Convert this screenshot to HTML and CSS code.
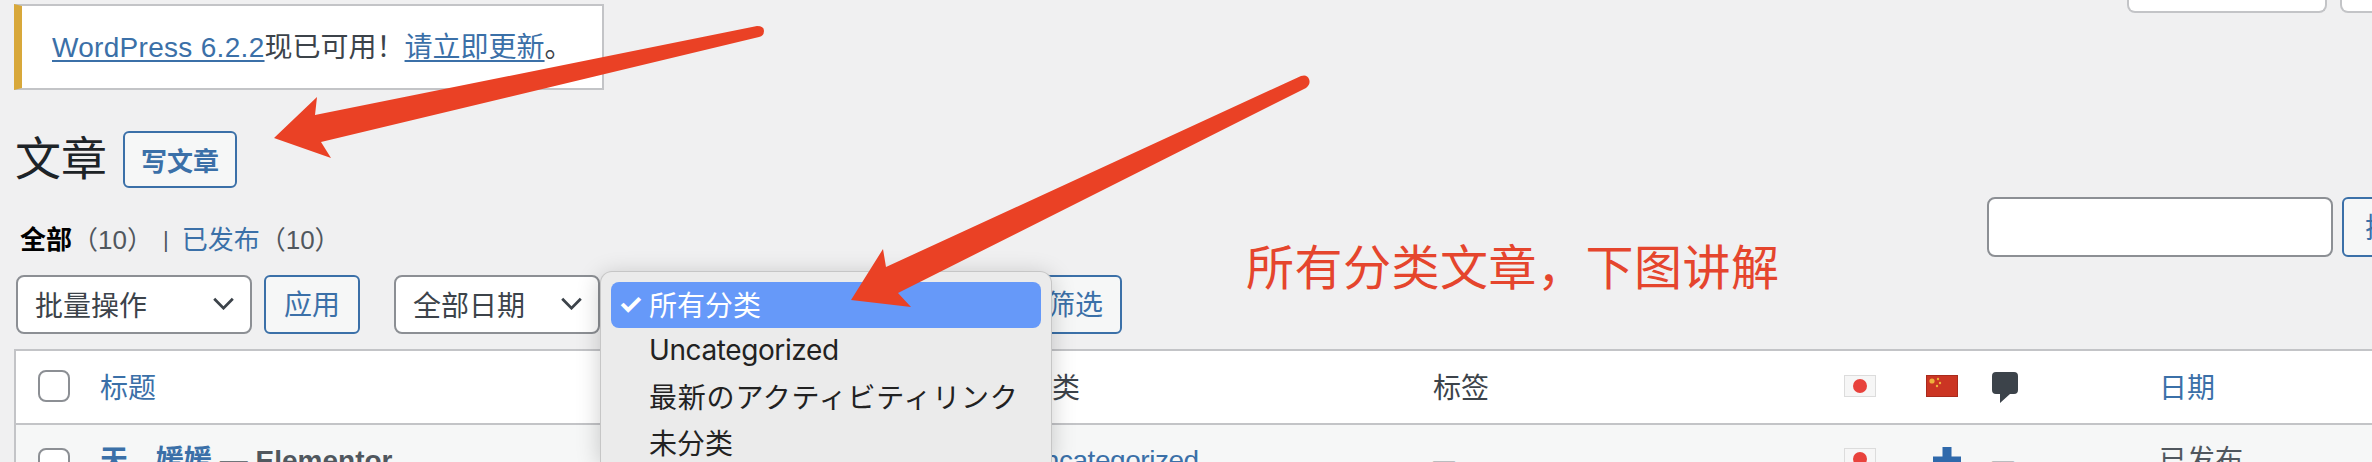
FILE: index.html
```html
<!DOCTYPE html>
<html lang="zh-CN">
<head>
    <meta charset="UTF-8">
    <meta name="viewport" content="width=device-width, initial-scale=1.0">
    <title>文章</title>
    <link rel="stylesheet" href="styles.css">
</head>
<body>
    <div class="top">
        <div class="notice"><a href="#">WordPress 6.2.2</a>现已可用！<a href="#">请立即更新</a>。</div>
        <div class="screen-tab"></div>
        <div class="screen-tab"></div>
    </div>

    <div class="heading">
        <h1>文章</h1>
        <a class="btn btn-new" href="#">写文章</a>
    </div>

    <div class="filters">
        <ul class="subsub">
            <li class="current">全部<span class="count">（10）</span></li>
            <li class="sep">|</li>
            <li><a href="#">已发布</a><span class="count">（10）</span></li>
        </ul>
        <div class="search-box">
            <div class="search-input"></div>
            <a class="btn btn-search" href="#">搜索文章</a>
        </div>
    </div>

    <div class="tablenav">
        <div class="select select-bulk">批量操作
            <svg class="chevron" viewBox="0 0 24 14"><path d="M2 2l10 10L22 2"/></svg>
        </div>
        <a class="btn btn-apply" href="#">应用</a>
        <div class="select select-date">全部日期
            <svg class="chevron" viewBox="0 0 24 14"><path d="M2 2l10 10L22 2"/></svg>
        </div>
        <div class="select select-cat"></div>
        <a class="btn btn-filter" href="#">筛选</a>
    </div>

    <div class="posts">
        <div class="row row-head">
            <span class="checkbox"></span>
            <a href="#">标题</a>
            <a class="plain" href="#">分类</a>
            <span>标签</span>
            <svg class="flag" viewBox="0 0 32 22"><rect width="32" height="22" fill="#dcdcdc"/><rect x="1" y="1" width="30" height="20" fill="#f6f6f6"/><circle cx="16" cy="11" r="7" fill="#e8423c"/></svg>
            <svg class="flag" viewBox="0 0 32 22"><rect width="32" height="22" fill="#a92a1c"/><rect x="1" y="1" width="30" height="20" fill="#cb3523"/><circle cx="6" cy="6" r="2.600" fill="#eeb13c"/><circle cx="12" cy="4" r="1.200" fill="#eeb13c"/><circle cx="14" cy="8" r="1.200" fill="#eeb13c"/><circle cx="11" cy="11" r="1.200" fill="#eeb13c"/></svg>
            <svg class="comment" viewBox="0 0 26 32"><path d="M4 0h18a4 4 0 0 1 4 4v14a4 4 0 0 1-4 4H18L8 31v-9H4a4 4 0 0 1-4-4V4a4 4 0 0 1 4-4z"/></svg>
            <a href="#">日期</a>
        </div>
        <div class="row row-post">
            <span class="checkbox"></span>
            <div class="post-title"><a href="#">天，媛媛</a> — Elementor</div>
            <a class="cat-link" href="#">Uncategorized</a>
            <span class="none">—</span>
            <svg class="flag" viewBox="0 0 32 22"><rect width="32" height="22" fill="#dcdcdc"/><rect x="1" y="1" width="30" height="20" fill="#f6f6f6"/><circle cx="16" cy="11" r="7" fill="#e8423c"/></svg>
            <svg class="plus" viewBox="0 0 28 28"><path d="M9.500 0h9v9.500H28v9h-9.500V28h-9v-9.500H0v-9h9.500z"/></svg>
            <span class="none">—</span>
            <span class="status">已发布</span>
        </div>
    </div>

    <ul class="menu">
        <li class="selected"><span class="check">✓</span>所有分类</li>
        <li class="latin">Uncategorized</li>
        <li class="kana" lang="ja">最新のアクティビティリンク</li>
        <li>未分类</li>
    </ul>

    <p class="note">所有分类文章，下图讲解</p>

    <svg class="arrows" viewBox="0 0 2372 462">
        <path d="M274 138L317 97L315 115L757 26Q764 26 764 31Q764 36 759 37L321 142L331 158Z"/>
        <path d="M851 300L883 249L886 267L1301 76Q1307 74 1309 79Q1311 84 1306 88L898 293L911 307Z"/>
    </svg>
</body>
</html>
```

FILE: styles.css
```css
* {
    box-sizing: border-box;
}

html, body {
    height: 462px;
    overflow: hidden;
}

body {
    position: relative;
    margin: 0;
    padding-left: 14px;
    background-color: #f0f0f1;
    color: #3c434a;
    font-family: "Liberation Sans", "Noto Sans CJK SC", sans-serif;
    font-size: 28px;
}

a {
    color: #3b70a8;
    text-decoration: none;
}

/* top row */
.top {
    display: flex;
    align-items: flex-start;
}

.notice {
    flex: none;
    width: 590px;
    height: 86px;
    margin-top: 4px;
    padding-left: 30px;
    border: 2px solid #c3c4c7;
    border-left: 8px solid #d8a83a;
    background-color: #fff;
    line-height: 83px;
}

.notice a {
    text-decoration: underline;
    text-underline-offset: 3px;
}

.notice a:first-child {
    letter-spacing: .3px;
}

.screen-tab {
    flex: none;
    width: 200px;
    height: 13px;
    margin-right: 13px;
    border: 2px solid #c3c4c7;
    border-top: none;
    border-radius: 0 0 8px 8px;
    background-color: #fff;
}

.notice + .screen-tab {
    margin-left: 1523px;
}

/* heading */
.heading {
    display: flex;
    align-items: center;
    margin-top: 41px;
}

h1 {
    width: 109px;
    margin: 0;
    padding-left: 1px;
    color: #1d2327;
    font-size: 46px;
    font-weight: 400;
    line-height: 55px;
}

.btn {
    display: flex;
    flex: none;
    align-items: center;
    justify-content: center;
    padding-bottom: 3px;
    border: 2px solid #3b70a8;
    border-radius: 6px;
    background-color: #f6f7f7;
    color: #3b70a8;
}

.btn-new {
    width: 114px;
    height: 57px;
    padding-bottom: 1px;
    font-size: 26px;
    font-weight: 700;
}

/* status links + search */
.filters {
    display: flex;
    align-items: flex-start;
    height: 60px;
    margin-top: 9px;
}

.subsub {
    display: flex;
    flex: none;
    width: 1973px;
    margin: 0;
    padding: 28px 0 0 6px;
    color: #50575e;
    font-size: 26px;
    line-height: 30px;
    list-style: none;
}

.subsub .current {
    color: #000;
    font-weight: 700;
}

.subsub .count {
    color: #50575e;
    font-weight: 400;
}

.subsub .sep {
    margin: 0 13px 0 10px;
    font-size: 22px;
}

.search-box {
    display: flex;
    flex: none;
    gap: 9px;
}

.search-input {
    width: 346px;
    height: 60px;
    border: 2px solid #8c8f94;
    border-radius: 8px;
    background-color: #fff;
}

.btn-search {
    width: 160px;
    height: 60px;
    justify-content: flex-start;
    padding-left: 21px;
    white-space: nowrap;
}

/* bulk actions */
.tablenav {
    display: flex;
    align-items: center;
    gap: 12px;
    height: 59px;
    margin: 18px 0 15px 2px;
}

.select {
    display: flex;
    flex: none;
    align-items: center;
    justify-content: space-between;
    height: 59px;
    padding: 0 15px 2px 17px;
    border: 2px solid #8c8f94;
    border-radius: 8px;
    background-color: #fff;
}

.select-bulk {
    width: 236px;
}

.select-date {
    width: 206px;
    margin-left: 22px;
}

.select-cat {
    width: 404px;
}

.chevron {
    width: 23px;
    height: 13px;
    fill: none;
    stroke: #3c434a;
    stroke-width: 3;
}

.btn-apply {
    width: 96px;
    height: 59px;
}

.btn-filter {
    width: 94px;
    height: 59px;
}

/* posts table */
.posts {
    border-top: 2px solid #c3c4c7;
    border-left: 2px solid #c3c4c7;
}

.row {
    display: grid;
    grid-template-columns: 62px 924px 409px 411px 82px 66px 167px 1fr;
    padding-left: 22px;
}

.row-head {
    align-items: center;
    height: 74px;
    padding-bottom: 2px;
    border-bottom: 2px solid #c3c4c7;
    background-color: #fff;
}

.row-head .plain {
    color: #3c434a;
}

.row-post {
    align-items: start;
    height: 37px;
    padding-top: 18px;
    background-color: #f6f7f7;
    overflow: hidden;
}

.row-post > * {
    line-height: 36px;
}

.cat-link {
    letter-spacing: -.45px;
}

.checkbox {
    display: block;
    width: 32px;
    height: 32px;
    border: 2px solid #8c8f94;
    border-radius: 8px;
    background-color: #fff;
}

.row-post .checkbox {
    margin-top: 5px;
}

.post-title {
    color: #50575e;
    font-weight: 700;
    white-space: nowrap;
}

.none {
    color: #8c8f94;
    font-size: 22px;
}

.status {
    color: #50575e;
}

.flag {
    display: block;
    width: 32px;
    height: 22px;
    filter: blur(.4px);
}

.row-post .flag {
    margin-top: 5px;
}

.plus {
    display: block;
    width: 28px;
    height: 28px;
    margin: 4px 0 0 7px;
    fill: #2f69ab;
}

.comment {
    display: block;
    width: 26px;
    height: 32px;
    margin-top: 3px;
    fill: #3c434a;
}

/* category dropdown, open over the table */
.menu {
    position: absolute;
    top: 271px;
    left: 600px;
    width: 452px;
    height: 191px;
    margin: 0;
    padding: 10px;
    overflow: hidden;
    border: 1px solid #c6c6c6;
    border-bottom: none;
    border-radius: 12px 12px 0 0;
    background-color: #ebebeb;
    box-shadow: 0 4px 24px rgba(0, 0, 0, .2);
    color: #222;
    font-family: Inter, "Noto Sans CJK SC", sans-serif;
    list-style: none;
}

.menu li {
    display: flex;
    align-items: center;
    height: 46px;
    padding: 0 0 2px 38px;
}

.menu .latin {
    letter-spacing: -.4px;
}

.menu .kana {
    font-family: Inter, "Noto Sans CJK JP", sans-serif;
    letter-spacing: .8px;
}

.menu .selected {
    padding-left: 7px;
    border-radius: 8px;
    background-color: #6699f9;
    color: #fff;
}

.check {
    width: 31px;
    font-size: 28px;
    font-weight: 700;
}

/* annotations drawn on the screenshot */
.note {
    position: absolute;
    top: 237px;
    left: 1246px;
    margin: 0;
    color: #e5452d;
    font-size: 48px;
    letter-spacing: .5px;
    line-height: 64px;
    white-space: nowrap;
}

.arrows {
    position: absolute;
    top: 0;
    left: 0;
    width: 2372px;
    height: 462px;
    fill: #ea4125;
    pointer-events: none;
}
```
